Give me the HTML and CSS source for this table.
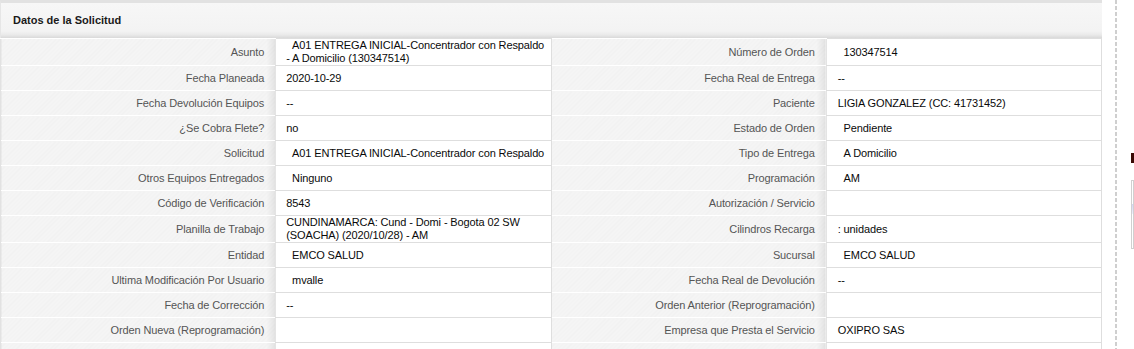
FILE: index.html
```html
<!DOCTYPE html>
<html lang="es">
<head>
<meta charset="utf-8">
<title>Datos de la Solicitud</title>
<link rel="stylesheet" href="styles.css">
</head>
<body>
<div class="layout">
  <section class="panel">
    <header class="panel-head">Datos de la Solicitud</header>
    <table class="details">
      <colgroup><col><col><col><col></colgroup>
      <tbody>
        <tr>
          <th>Asunto</th><td>&nbsp;&nbsp;A01 ENTREGA INICIAL-Concentrador con Respaldo - A Domicilio (130347514)</td>
          <th>Número de Orden</th><td>&nbsp;&nbsp;130347514</td>
        </tr>
        <tr>
          <th>Fecha Planeada</th><td>2020-10-29</td>
          <th>Fecha Real de Entrega</th><td>--</td>
        </tr>
        <tr>
          <th>Fecha Devolución Equipos</th><td>--</td>
          <th>Paciente</th><td>LIGIA GONZALEZ (CC: 41731452)</td>
        </tr>
        <tr>
          <th>¿Se Cobra Flete?</th><td>no</td>
          <th>Estado de Orden</th><td>&nbsp;&nbsp;Pendiente</td>
        </tr>
        <tr>
          <th>Solicitud</th><td>&nbsp;&nbsp;A01 ENTREGA INICIAL-Concentrador con Respaldo</td>
          <th>Tipo de Entrega</th><td>&nbsp;&nbsp;A Domicilio</td>
        </tr>
        <tr>
          <th>Otros Equipos Entregados</th><td>&nbsp;&nbsp;Ninguno</td>
          <th>Programación</th><td>&nbsp;&nbsp;AM</td>
        </tr>
        <tr>
          <th>Código de Verificación</th><td>8543</td>
          <th>Autorización / Servicio</th><td></td>
        </tr>
        <tr>
          <th>Planilla de Trabajo</th><td>CUNDINAMARCA: Cund - Domi - Bogota 02 SW (SOACHA) (2020/10/28) - AM</td>
          <th>Cilindros Recarga</th><td>: unidades</td>
        </tr>
        <tr>
          <th>Entidad</th><td>&nbsp;&nbsp;EMCO SALUD</td>
          <th>Sucursal</th><td>&nbsp;&nbsp;EMCO SALUD</td>
        </tr>
        <tr>
          <th>Ultima Modificación Por Usuario</th><td>&nbsp;&nbsp;mvalle</td>
          <th>Fecha Real de Devolución</th><td>--</td>
        </tr>
        <tr>
          <th>Fecha de Corrección</th><td>--</td>
          <th>Orden Anterior (Reprogramación)</th><td></td>
        </tr>
        <tr>
          <th>Orden Nueva (Reprogramación)</th><td></td>
          <th>Empresa que Presta el Servicio</th><td>OXIPRO SAS</td>
        </tr>
        <tr>
          <th></th><td></td>
          <th></th><td></td>
        </tr>
      </tbody>
    </table>
  </section>
  <div class="divider"></div>
  <aside class="side">
    <div class="side-title"></div>
    <div class="side-box"><div class="side-band"></div></div>
  </aside>
</div>
</body>
</html>
```

FILE: styles.css
```css
html, body {
  margin: 0;
  padding: 0;
  background: #fff;
  height: 100%;
  overflow: hidden;
}

body {
  font-family: "Liberation Sans", Arial, sans-serif;
  font-size: 11px;
  color: #111;
}

.layout {
  display: flex;
  align-items: stretch;
  height: 100%;
}

.panel {
  width: 1102px;
  flex: none;
}

.panel-head {
  box-sizing: border-box;
  height: 38px;
  padding: 10px 0 0 12px;
  border-top: 3px solid #e2e2e2;
  border-left: 1px solid #e6e6e6;
  background: linear-gradient(to bottom, #f7f7f7 0, #f3f3f3 28px, #e9e9e9 32px, #d9d9d9 35px);
  font-weight: bold;
  font-size: 11px;
  color: #1a1a1a;
  line-height: 14px;
}

.details {
  width: 1102px;
  table-layout: fixed;
  border-collapse: collapse;
  font-size: 11px;
  letter-spacing: -0.12px;
}

.details col { width: 25%; }

.details th,
.details td {
  height: 24px;
  line-height: 13px;
  vertical-align: middle;
}

.details th {
  padding: 0 11px 0 10px;
  font-weight: normal;
  text-align: right;
  color: #555;
  border-top: 1px solid #fff;
  border-left: 1px solid #e2e2e2;
  background:
    linear-gradient(to right, rgba(0, 0, 0, 0) calc(100% - 9px), rgba(0, 0, 0, 0.03) calc(100% - 5px), rgba(0, 0, 0, 0.08)),
    repeating-linear-gradient(135deg, #f5f5f5 0 2px, #f1f1f1 2px 3px);
}

.details td {
  padding: 0 3px 0 10px;
  background: #fff;
  border: 1px solid #dedede;
  border-left-color: #e4e4e4;
  color: #0a0a0a;
  word-wrap: break-word;
}

.details td:last-child { padding-left: 11px; }

.divider {
  flex: none;
  width: 2px;
  margin-left: 13px;
  background: repeating-linear-gradient(to bottom, #cfcfcf 0 4px, transparent 4px 6px);
}

.side {
  flex: 1;
  padding-left: 14px;
  overflow: hidden;
}

.side-title {
  width: 10px;
  height: 10px;
  margin-top: 153px;
  background: #3a0a05;
}

.side-box {
  box-sizing: border-box;
  height: 69px;
  margin-top: 17px;
  border: 1px solid #d0d0d0;
  padding-top: 23px;
}

.side-band {
  height: 10px;
  background: linear-gradient(to bottom, #d4d4f4, #eeeefc);
}
```
